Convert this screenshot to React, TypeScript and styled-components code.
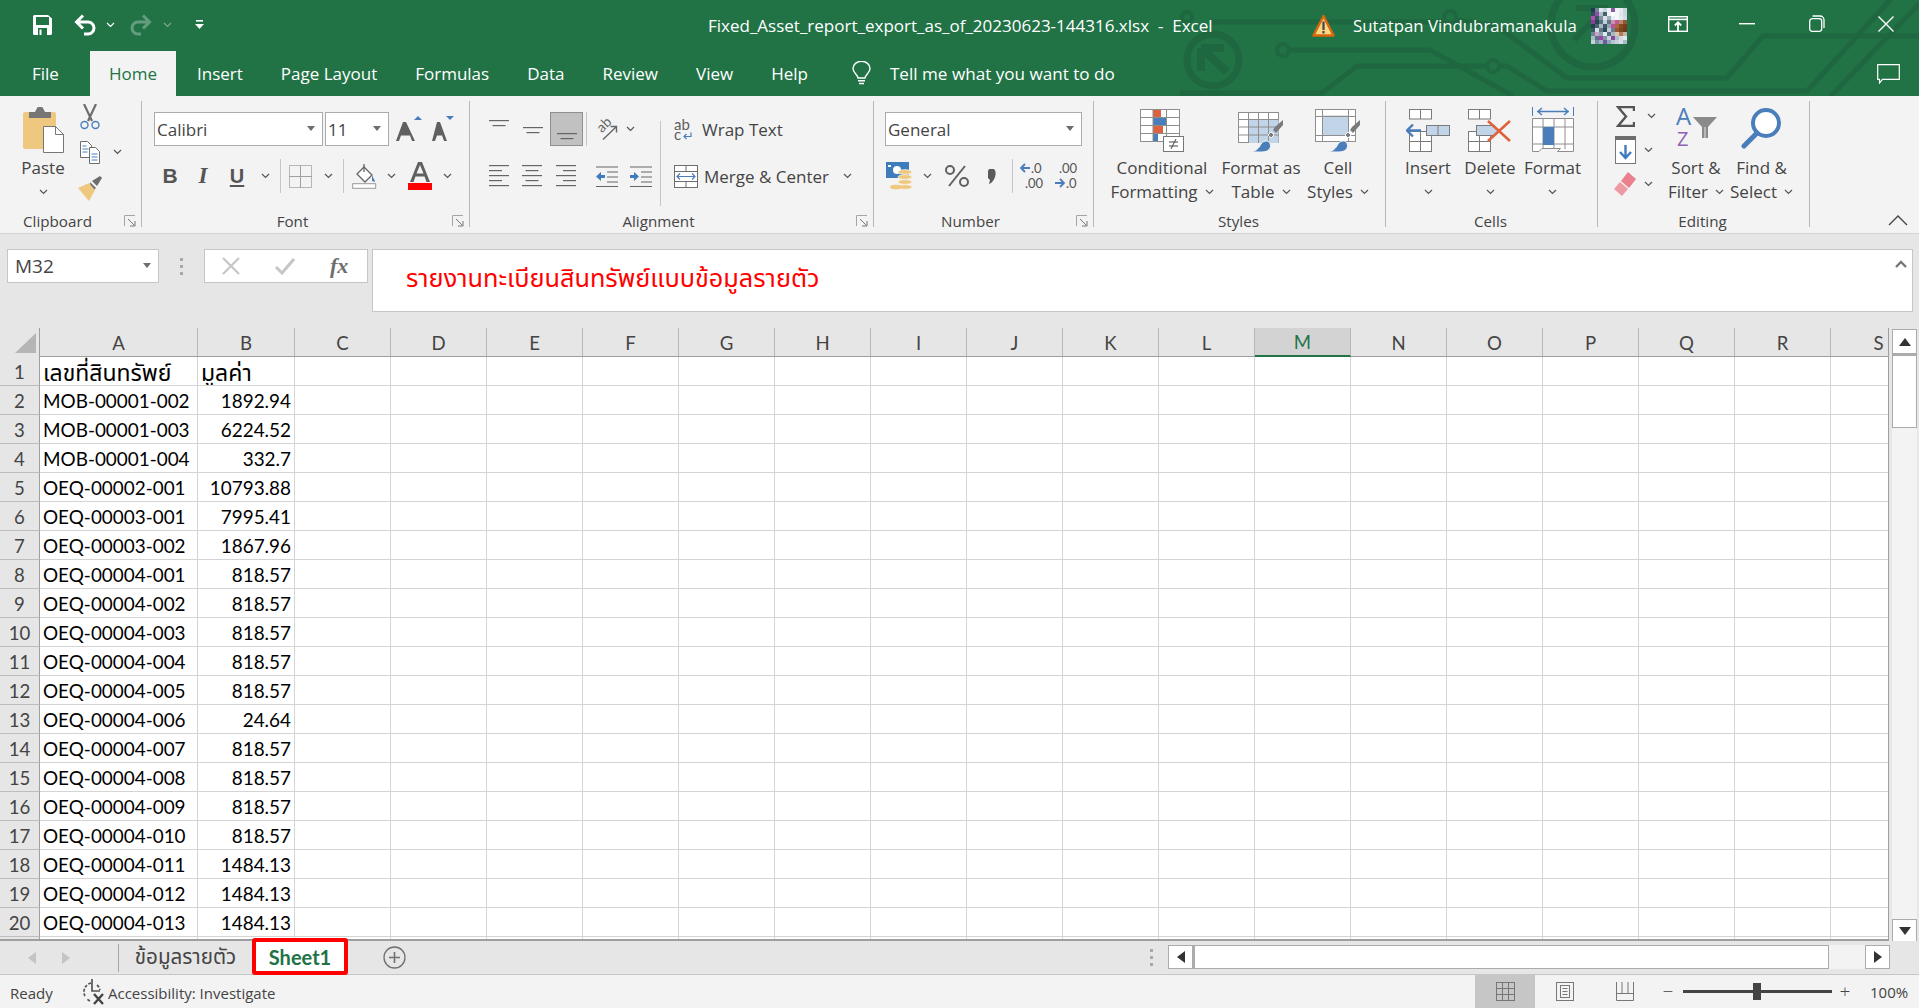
import React from "react";
import styled, { createGlobalStyle } from "styled-components";

const ui = `"Open Sans", "Noto Sans", sans-serif`;
const sheetFont = `Lato, "Noto Sans Thai", "Noto Sans", sans-serif`;
const green = "#217346";
const ink = "#444444";

const Global = createGlobalStyle`
  html, body { margin: 0; padding: 0; background: #e6e6e6; }
  svg { display: block; flex: none; }
`;

const Page = styled.div`
  width: 1919px; height: 1008px; overflow: hidden; display: flex; flex-direction: column;
  background: #e6e6e6; font-family: ${ui}; color: ${ink};
`;
const TopBand = styled.header`
  position: relative; height: 96px; flex: none; background: ${green}; color: #fff; overflow: hidden;
`;
const Circuit = styled.svg`position: absolute; inset: 0;`;
const TitleRow = styled.div`
  position: relative; height: 51px; display: flex; align-items: center; padding-left: 33px;
`;
const Qat = styled.div`width: 675px; flex: none; display: flex; align-items: center; margin-top: -2px;`;
const QatItem = styled.div<{ $w: number }>`width: ${p => p.$w}px; display: flex;`;
const DocTitle = styled.div`
  width: 604px; flex: none; font-size: 17px; white-space: pre; color: #fff;
`;
const UserName = styled.div`
  width: 238px; flex: none; font-size: 16.8px; white-space: pre; margin-left: 18px;
`;
const WindowControls = styled.div`display: flex; flex: none; align-items: center; margin-left: 16px; margin-top: -4px;`;
const WinBtn = styled.div`width: 69.5px; display: flex; justify-content: center;`;
const TabRow = styled.nav`position: relative; height: 45px; display: flex; align-items: stretch;`;
const Tab = styled.div<{ $active?: boolean }>`
  padding: 0 19px; margin: ${p => (p.$active ? "0 2px 0 12px" : "0")};
  display: flex; align-items: center; font-size: 17px; padding-bottom: 1px;
  background: ${p => (p.$active ? "#f3f3f3" : "transparent")};
  color: ${p => (p.$active ? green : "#fff")};
  &:first-child { padding-left: 32px; }
`;
const TellMe = styled.div`
  display: flex; align-items: center; gap: 19px; margin-left: 25px; font-size: 17.1px; padding-bottom: 1px;
`;
const CommentBtn = styled.div`margin-left: auto; margin-right: 19px; align-self: center;`;

const Ribbon = styled.section`
  position: relative; height: 138px; flex: none; display: flex; background: #f3f3f3; border-bottom: 1px solid #d4d4d4; box-sizing: border-box;
`;
const Group = styled.div<{ $w: number }>`
  position: relative; width: ${p => p.$w}px; flex: none; box-sizing: border-box; margin: 5px 0 6px;
  border-right: 1px solid #b7b7b7; display: flex; flex-direction: column;
`;
const Body = styled.div<{ $pt?: number; $pl?: number }>`
  flex: 1; display: flex; min-height: 0; padding-top: ${p => p.$pt ?? 0}px; padding-left: ${p => p.$pl ?? 0}px;
`;
const GroupLabel = styled.div<{ $launcher?: boolean }>`
  height: 10px; line-height: 8px; text-align: center; font-size: 15.2px; color: ${ink}; white-space: nowrap;
  padding-right: ${p => (p.$launcher ? 26 : 2)}px;
`;
const Launcher = styled.div`position: absolute; right: 5px; bottom: 0;`;
const Stack = styled.div<{ $gap?: number; $mt?: number }>`
  display: flex; flex-direction: column; gap: ${p => p.$gap ?? 0}px; margin-top: ${p => p.$mt ?? 0}px;
`;
const ToolRow = styled.div<{ $h?: number }>`display: flex; align-items: center; height: ${p => p.$h ?? 34}px;`;
const Tool = styled.div<{ $w: number; $on?: boolean }>`
  width: ${p => p.$w}px; height: 34px; flex: none; display: flex; align-items: center; justify-content: center; box-sizing: border-box;
  background: ${p => (p.$on ? "#c1c1c1" : "transparent")}; border: ${p => (p.$on ? "1px solid #8f8f8f" : "0")};
`;
const ToolSep = styled.div<{ $w: number }>`
  width: ${p => p.$w}px; height: 34px; flex: none; display: flex; justify-content: center;
  &::after { content: ""; width: 1px; height: 100%; background: #c6c6c6; }
`;
const Combo = styled.div<{ $w: number; $ml?: number }>`
  width: ${p => p.$w}px; height: 34px; margin-left: ${p => p.$ml ?? 0}px; box-sizing: border-box; flex: none; background: #fff; border: 1px solid #ababab;
  display: flex; align-items: center; justify-content: space-between; padding: 0 7px 0 2px;
  font-size: 17px; color: ${ink};
`;
const ComboCaret = styled.span`
  width: 0; height: 0; border-left: 4px solid transparent; border-right: 4px solid transparent; border-top: 5px solid #6d6d6d; margin-top: -2px;
`;
const BigBtn = styled.div<{ $w: number }>`
  width: ${p => p.$w}px; flex: none; display: flex; flex-direction: column; align-items: center; font-size: 17px; color: ${ink};
`;
const BigIcon = styled.div`height: 52px; display: flex; align-items: center; justify-content: center;`;
const BigLine = styled.div`height: 24px; line-height: 24px; white-space: nowrap; display: flex; align-items: center; gap: 7px;`;
const InlineBtn = styled.div<{ $gap: number }>`
  height: 34px; display: flex; align-items: center; gap: ${p => p.$gap}px; font-size: 17px; color: ${ink}; white-space: nowrap;
`;
const MergeChev = styled.span`margin-left: 8px;`;
const VSep = styled.div`width: 1px; height: 85px; background: #c6c6c6; margin: 9px 13px 0 3px; flex: none;`;
const Collapse = styled.div`position: absolute; right: 11px; bottom: 7px;`;

const FormulaBar = styled.section`
  height: 94px; flex: none; box-sizing: border-box; padding: 15px 6px 0 7px; display: flex; align-items: flex-start; background: #e6e6e6;
`;
const NameBox = styled.div`
  width: 152px; height: 34px; box-sizing: border-box; background: #fff; border: 1px solid #c6c6c6; display: flex; align-items: center; justify-content: space-between;
  padding: 0 7px; font-size: 19px; color: ${ink};
`;
const Dots = styled.div`width: 45px; height: 34px; display: flex; align-items: center; justify-content: center;`;
const FxBox = styled.div`
  width: 164px; height: 34px; box-sizing: border-box; background: #fff; border: 1px solid #c6c6c6; display: flex; align-items: center; gap: 35px; padding-left: 17px;
`;
const FxGlyph = styled.span`font-family: "Liberation Serif", serif; font-style: italic; font-weight: 700; font-size: 22px; color: #6e6e6e;`;
const FormulaInput = styled.div`
  position: relative; flex: 1; height: 63px; margin-left: 4px; box-sizing: border-box; background: #fff; border: 1px solid #c6c6c6;
  padding: 7px 0 0 33px; color: #ff0000; font-family: ${sheetFont}; font-size: 25.3px; line-height: 40px;
`;
const FormulaChevron = styled.div`position: absolute; right: 5px; top: 10px;`;

const SheetArea = styled.section`
  height: 613px; flex: none; display: flex; box-sizing: border-box; background: #e6e6e6;
`;
const Grid = styled.div`
  width: 1889px; flex: none; box-sizing: border-box; overflow: hidden; border-bottom: 2px solid #9f9f9f; border-right: 1px solid #9f9f9f;
`;
const columns = "40px 158px 97px repeat(17, 96px)";
const HeadRow = styled.div`
  display: grid; grid-template-columns: ${columns}; height: 29px; box-sizing: border-box; border-bottom: 1px solid #9f9f9f;
`;
const ColHead = styled.div<{ $selected?: boolean }>`
  box-sizing: border-box; background: ${p => (p.$selected ? "#d3d3d3" : "#e6e6e6")}; border-right: 1px solid #b6b6b6;
  border-bottom: ${p => (p.$selected ? `2px solid ${green}` : "0")}; height: ${p => (p.$selected ? "29px" : "28px")};
  display: flex; align-items: center; justify-content: center; padding-top: 1px;
  font-family: ${sheetFont}; font-size: 18.6px; color: ${p => (p.$selected ? green : ink)};
`;
const Corner = styled.div`
  background: #e6e6e6; border-right: 1px solid #9f9f9f; padding: 5px 0 0 15px; box-sizing: border-box;
`;
const DataRow = styled.div`display: grid; grid-template-columns: ${columns}; height: 29px; box-sizing: border-box;`;
const RowHead = styled.div`
  box-sizing: border-box; background: #e6e6e6; border-right: 1px solid #9f9f9f; border-bottom: 1px solid #bdbdbd; padding-top: 2px;
  display: flex; align-items: center; justify-content: center; font-family: ${sheetFont}; font-size: 18.6px; color: ${ink};
`;
const GridCell = styled.div<{ $right?: boolean; $thai?: boolean }>`
  box-sizing: border-box; background: #fff; border-right: 1px solid #d4d4d4; border-bottom: 1px solid #d4d4d4;
  padding: 0 3px 0 3px; text-align: ${p => (p.$right ? "right" : "left")}; line-height: 30px; height: 29px; white-space: nowrap; overflow: hidden;
  font-family: ${sheetFont}; font-size: ${p => (p.$thai ? "23px" : "18.9px")}; color: #000;
`;
const VScroll = styled.div`
  width: 25px; margin-left: 3px; display: flex; flex-direction: column; height: 614px; background: #f3f3f3; margin-top: 1px;
`;
const ScrollBtn = styled.div<{ $w?: number; $h?: number }>`
  width: ${p => p.$w ?? 25}px; height: ${p => p.$h ?? 25}px; box-sizing: border-box; flex: none; background: #fff; border: 1px solid #ababab;
  display: flex; align-items: center; justify-content: center;
`;
const VThumb = styled.div`height: 74px; box-sizing: border-box; background: #fff; border: 1px solid #ababab; border-top-width: 2px;`;
const VTrack = styled.div`flex: 1;`;

const TabBar = styled.section`
  height: 34px; flex: none; box-sizing: border-box; display: flex; align-items: stretch; background: #e6e6e6; border-bottom: 1px solid #c6c6c6;
`;
const NavArrows = styled.div`width: 118px; display: flex; align-items: center; gap: 26px; padding-left: 28px; box-sizing: border-box;`;
const TabDivider = styled.div`width: 1px; height: 28px; background: #a6a6a6; align-self: center;`;
const SheetTab = styled.div`
  width: 133px; display: flex; align-items: center; justify-content: center; font-family: ${sheetFont}; font-size: 20.6px; color: ${ink}; box-sizing: border-box;
`;
const ActiveTab = styled.div`
  position: relative; z-index: 2; width: 96px; height: 37px; margin-top: -3px; box-sizing: border-box; background: #fff; border: 4px solid #ff0000; border-radius: 3px;
  display: flex; align-items: center; justify-content: center; font-family: ${sheetFont}; font-weight: 700; font-size: 20px; color: ${green};
`;
const AddSheet = styled.div`margin-left: 35px; align-self: center;`;
const TabDots = styled.div`margin-left: 744px; align-self: center; width: 18px;`;
const HScroll = styled.div`width: 722px; height: 24px; margin: 4px 0 0; display: flex; background: #f3f3f3;`;
const HThumb = styled.div`width: 636px; box-sizing: border-box; background: #fff; border: 1px solid #ababab; border-left-width: 2px; margin-right: auto;`;

const StatusBar = styled.footer`
  flex: 1; display: flex; align-items: center; background: #f3f3f3; font-size: 15px; color: ${ink};
`;
const Ready = styled.div`width: 81px; padding: 2px 0 0 10px; box-sizing: border-box;`;
const Accessibility = styled.div`display: flex; align-items: center; gap: 1px; width: 1394px; padding-top: 1px; box-sizing: border-box;`;
const AccessText = styled.span`padding-top: 1px;`;
const ViewBtn = styled.div<{ $on?: boolean; $w: number }>`
  width: ${p => p.$w}px; height: 33px; display: flex; align-items: center; justify-content: center; background: ${p => (p.$on ? "#c6c6c6" : "transparent")};
`;
const ZoomSlider = styled.div`
  position: relative; width: 149px; height: 3px; background: #444; margin: 0 5px 0 7px;
`;
const ZoomThumb = styled.div`position: absolute; left: 70px; top: -7px; width: 8px; height: 17px; background: #444;`;
const ZoomSign = styled.span<{ $ml?: number }>`width: 16px; margin-left: ${p => p.$ml ?? 0}px; text-align: center; font-size: 19px; font-weight: 300; line-height: 1;`;
const ZoomValue = styled.div`margin-left: 17px;`;

/* ---- drawings ---- */
const Chev = ({ c = "#555" }: { c?: string }) => (
  <svg width="9" height="6" viewBox="0 0 9 6"><path d="M1 1l3.5 3.5L8 1" fill="none" stroke={c} strokeWidth="1.2" /></svg>
);
const CircuitArt = () => (
  <Circuit width="1919" height="96" viewBox="0 0 1919 96" fill="none" stroke="#1f6740" strokeWidth="5">
    <path d="M1210 22H1445" />
    <circle cx="1187" cy="17" r="5" strokeWidth="4" />
    <circle cx="1450" cy="17" r="6" strokeWidth="4" />
    <circle cx="1283" cy="50" r="6" strokeWidth="4" />
    <path d="M1289 50H1430L1513 96" />
    <path d="M1180 93H1322L1357 66H1487M1499 66H1507L1547 91H1807L1892 -2" />
    <circle cx="1493" cy="66" r="6" strokeWidth="4" />
    <circle cx="1213" cy="60" r="26" strokeWidth="7" />
    <path d="M1201 48V71M1201 48H1224M1201 48L1227 72" strokeWidth="8" />
    <circle cx="1593" cy="25" r="42" strokeWidth="7" />
    <path d="M1576 8H1605V36M1605 8L1574 40" strokeWidth="6" />
    <path d="M1456 20L1497 26L1563 75Q1565 78 1570 78H1727L1763 36H1919" />
    <path d="M1830 97L1919 4" />
  </Circuit>
);
const SaveIcon = () => (
  <svg width="19" height="20" viewBox="0 0 19 20">
    <path d="M0 1.5A1.5 1.5 0 011.5 0H15l4 3.5V18.5a1.5 1.5 0 01-1.5 1.5H1.5A1.5 1.5 0 010 18.5z" fill="#fff" />
    <rect x="3" y="2" width="13" height="8" fill={green} />
    <rect x="5" y="13" width="9" height="7" fill={green} />
    <rect x="6.5" y="14.5" width="2" height="5.5" fill="#fff" />
  </svg>
);
const UndoIcon = () => (
  <svg width="22" height="22" viewBox="0 0 22 22">
    <path d="M9 1.5L2.5 8L9 14.5M3 8H14a6 6 0 010 12H10" fill="none" stroke="#fff" strokeWidth="3" />
  </svg>
);
const RedoIcon = () => (
  <svg width="22" height="22" viewBox="0 0 22 22" opacity="0.3">
    <path d="M13 1.5L19.5 8L13 14.5M19 8H8a6 6 0 000 12h3" fill="none" stroke="#fff" strokeWidth="3" />
  </svg>
);
const CustomizeIcon = () => (
  <svg width="9" height="10" viewBox="0 0 9 10"><rect x="1" width="7" height="1.6" fill="#fff" /><path d="M0 4h9L4.5 9z" fill="#fff" /></svg>
);
const WarnIcon = () => (
  <svg width="23" height="23" viewBox="0 0 23 23">
    <path d="M11.5 2L21.5 21.5H1.5z" fill="#f9d586" stroke="#d9670e" strokeWidth="2.4" strokeLinejoin="round" />
    <rect x="10.4" y="7.5" width="2.2" height="8.5" fill="#444" /><rect x="10.4" y="17" width="2.2" height="2.4" fill="#444" />
  </svg>
);
const avatarPixels = [
  ["#1f3d48", "#6f8490", "#dfe8ee", "#c5d2dc", "#eef2f5", "#8a5aa8", "#f2f5f7", "#e7ecf0", "#c8d3db"],
  ["#2f4f5c", "#8c4fa6", "#aebfca", "#47606c", "#eef2f5", "#ffffff", "#f4f6f8", "#dfe6ea", "#cbd6de"],
  ["#b24fb4", "#3a5562", "#7f95a2", "#d9e3e9", "#9db0bc", "#e9eef2", "#f7f8fa", "#e3e9ee", "#d2dbe2"],
  ["#8a3f9c", "#2b4653", "#55707e", "#c2d0d9", "#5d7885", "#cf8fb0", "#c05a8e", "#b88a6a", "#8f5a35"],
  ["#24414d", "#47626f", "#a3b6c2", "#3f5966", "#90a5b1", "#c04fa0", "#a8683c", "#8a4a22", "#7a3d18"],
  ["#3a5662", "#d4dee5", "#5f7a87", "#2f4a57", "#bccad3", "#6a7f8c", "#96572c", "#7d4520", "#6d3a1a"],
  ["#6f8794", "#c8a0c8", "#8ca0ac", "#e2e9ee", "#56707d", "#a8b8c3", "#d9c4b0", "#b07f58", "#c5b3a5"],
  ["#a9bcc8", "#5a7482", "#a040a8", "#7e96a3", "#c4d1da", "#8a47a0", "#aebdc8", "#d4dde4", "#e4e9ee"],
  ["#c3d1db", "#7c95a6", "#9eb3c3", "#6f5a9a", "#8ea5b6", "#b6c4d0", "#c7d2dc", "#d8e0e7", "#a8b9c8"],
];
const Avatar = () => (
  <svg width="36" height="36" viewBox="0 0 9 9" shapeRendering="crispEdges">
    {avatarPixels.map((line, y) => line.map((fill, x) => <rect key={`${x}-${y}`} x={x} y={y} width="1" height="1" fill={fill} />))}
  </svg>
);
const PublishIcon = () => (
  <svg width="20" height="16" viewBox="0 0 20 16" fill="none" stroke="#fff" strokeWidth="1.4">
    <rect x=".7" y=".7" width="18.6" height="14.6" /><path d="M1 3.4h18" strokeWidth="1.6" /><path d="M10 15V6.5M6.8 9.5L10 6.3l3.2 3.2" strokeWidth="1.8" />
  </svg>
);
const MinIcon = () => <svg width="16" height="2" viewBox="0 0 16 2"><rect width="16" height="1.4" fill="#fff" /></svg>;
const RestoreIcon = () => (
  <svg width="16" height="17" viewBox="0 0 16 17" fill="none" stroke="#fff" strokeWidth="1.3">
    <rect x=".7" y="3.7" width="12" height="12.6" rx="2.5" /><path d="M3.5 1h7.5a4 4 0 014 4v8" />
  </svg>
);
const CloseIcon = () => (
  <svg width="16" height="16" viewBox="0 0 16 16"><path d="M.5.5l15 15M15.5.5l-15 15" stroke="#fff" strokeWidth="1.4" /></svg>
);
const BulbIcon = () => (
  <svg width="19" height="25" viewBox="0 0 19 25" fill="none" stroke="#fff" strokeWidth="1.4">
    <path d="M6 17c0-3-5-5-5-9.500a8.500 7.200 0 0117 0C18 12 13 14 13 17z" /><path d="M6 19.800h7M7 22.500h5" strokeWidth="1.6" />
  </svg>
);
const CommentIcon = () => (
  <svg width="23" height="20" viewBox="0 0 23 20"><path d="M.7.7h21.600v14.600H5.500L2.500 19v-3.700H.7z" fill="none" stroke="#fff" strokeWidth="1.2" /></svg>
);
const PasteIcon = () => (
  <svg width="41" height="46" viewBox="0 0 41 46">
    <rect y="5" width="33" height="37" rx="2" fill="#edc87e" />
    <path d="M6 5h6l2-4a2 2 0 012-1h2a2 2 0 012 1l2 4h6v6H6z" fill="#767676" />
    <path d="M20.500 19.500h12l8 8v18h-20z" fill="#fff" stroke="#767676" />
    <path d="M32.500 19.500v8h8" fill="none" stroke="#767676" />
  </svg>
);
const CutIcon = () => (
  <svg width="20" height="26" viewBox="0 0 20 26" fill="none">
    <path d="M4 0l8 17M16 0L8 17" stroke="#6d6d6d" strokeWidth="2.200" />
    <circle cx="4.500" cy="21" r="3.500" stroke="#4a7ebb" strokeWidth="1.400" /><circle cx="15.500" cy="21" r="3.500" stroke="#4a7ebb" strokeWidth="1.400" />
  </svg>
);
const CopyIcon = () => (
  <svg width="20" height="23" viewBox="0 0 20 23" fill="#fff" stroke="#6d6d6d">
    <path d="M.5.500h7l4 4v12H.5z" /><path d="M9.500 6.500h6l4 4v12h-10z" />
    <path d="M2.500 5h4M2.500 8h6M2.500 11h5M11.500 13h6M11.500 16h6M11.500 19h6" stroke="#4a7ebb" />
  </svg>
);
const BrushIcon = () => (
  <svg width="24" height="25" viewBox="0 0 24 25">
    <path d="M14 5l5 5 5-8-2-2z" fill="#6d6d6d" />
    <path d="M12 6l6 6-5 5z" fill="#6d6d6d" />
    <path d="M11 7l6 7-6 11-11-13z" fill="#edc87e" />
  </svg>
);
const GrowA = ({ s, up }: { s: number; up: boolean }) => (
  <svg width={s + 10} height="26" viewBox={`0 0 ${s + 10} 26`}>
    <path d={`M${s / 2 - 1} 6L1 25h3l2-5.500h${s - 9}L${s - 1} 25h3L${s / 2 + 2} 6z`} fill="#606060" />
    {up ? <path d={`M${s + 1} 3h8l-4-4z`} transform="translate(0 1)" fill="#4a7ebb" /> : <path d={`M${s + 1} 0h8l-4 4z`} fill="#4a7ebb" />}
  </svg>
);
const BoldB = styled.span`font-family: "Liberation Sans", sans-serif; font-weight: 700; font-size: 21px; color: #555;`;
const ItalicI = styled.span`font-family: "Liberation Serif", serif; font-style: italic; font-weight: 700; font-size: 23px; color: #555;`;
const UnderU = styled.span`font-family: "Liberation Sans", sans-serif; font-size: 20px; font-weight: 700; color: #555; text-decoration: underline; text-underline-offset: 2px;`;
const BorderIcon = () => (
  <svg width="23" height="23" viewBox="0 0 23 23" fill="none" stroke="#7a7a7a" strokeDasharray="1 1">
    <rect x=".5" y=".5" width="22" height="22" /><path d="M11.500 0v23M0 11.500h23" strokeDasharray="none" stroke="#a0a0a0" />
  </svg>
);
const FillIcon = () => (
  <svg width="25" height="25" viewBox="0 0 25 25">
    <path d="M12 3l8 8-7 7-8-8z" fill="#fff" stroke="#666" strokeWidth="1.300" />
    <path d="M12 0v8" stroke="#666" strokeWidth="1.300" /><path d="M20 11c1 3 3 5 3 7l-3-1z" fill="#4a7ebb" />
    <rect x=".7" y="19.700" width="23" height="4.600" fill="#fff" stroke="#999" />
  </svg>
);
const ColorA = () => (
  <svg width="24" height="28" viewBox="0 0 24 28">
    <path d="M10 0L2 20h3.500l2-5.500h9L18.500 20H22L14 0zM8.500 11.500L12 3l3.500 8.500z" fill="#606060" />
    <rect y="21" width="24" height="7" fill="#ff0000" />
  </svg>
);
const Lines = ({ y, kind }: { y: number[]; kind: "center" | "left" | "right" }) => (
  <svg width="20" height="24" viewBox="0 0 20 24">
    {y.map((v, i) => {
      const short = i % 2 === 1;
      const w = short ? 13 : 20;
      const x = !short || kind === "left" ? 0 : kind === "right" ? 7 : 3.5;
      return <rect key={v} x={x} y={v} width={w} height="1.2" fill="#666" />;
    })}
  </svg>
);
const OrientText = styled.text`font-family: Lato, sans-serif; font-size: 14px; fill: #666;`;
const OrientIcon = () => (
  <svg width="30" height="36" viewBox="-4 -6 30 36" fill="none">
    <OrientText x="2" y="13" transform="rotate(-45 6 12)" dx="1" dy="2">ab</OrientText>
    <path d="M7 22.500L20 10M14.500 9.500H20.500V15.500" stroke="#666" strokeWidth="1.400" />
  </svg>
);
const Indent = ({ dir }: { dir: "dec" | "inc" }) => (
  <svg width="22" height="21" viewBox="0 0 22 21">
    <rect y=".5" width="22" height="1" fill="#666" />
    {[5.500, 10.500, 15.500].map(v => <rect key={v} x="11" y={v} width="11" height="1" fill="#666" />)}
    <rect y="20" width="22" height="1" fill="#666" />
    <path d={dir === "dec" ? "M0 10.500l5-4.500v3h4v3H5v3z" : "M9 10.500L4 6v3H0v3h4v3z"} fill="#3f7cbd" />
  </svg>
);
const WrapIcon = () => (
  <svg width="18" height="26" viewBox="0 0 18 26" fill="none">
    <text x="0" y="14" fontSize="15" fill="#5f5f5f" fontFamily="Lato, sans-serif">ab</text>
    <text x="0" y="24" fontSize="15" fill="#5f5f5f" fontFamily="Lato, sans-serif">c</text>
    <path d="M17 16.500v4h-7M12.500 18l-2.500 2.500 2.500 2.500" stroke="#4a7ebb" strokeWidth="1.200" />
  </svg>
);
const MergeIcon = () => (
  <svg width="24" height="23" viewBox="0 0 24 23" fill="#fff" stroke="#6d6d6d">
    <rect x=".5" y=".5" width="23" height="22" />
    <path d="M0 6.500h24M0 16.500h24M12 0v6M12 17v6" />
    <path d="M3 11.500h18M6 8.500l-3 3 3 3M18 8.500l3 3-3 3" stroke="#4a7ebb" strokeWidth="1.200" fill="none" />
  </svg>
);
const CurrencyIcon = () => (
  <svg width="28" height="29" viewBox="0 0 28 29">
    <rect width="23" height="16" fill="#3f7cbd" /><circle cx="11" cy="8" r="4" fill="#fff" /><rect x="2" y="3" width="3" height="2" fill="#fff" />
    {[10, 15, 20, 25].map(v => <ellipse key={v} cx="19" cy={v} rx="7" ry="2.300" fill="#edc87e" stroke="#f7f3e6" strokeWidth=".8" />)}
    <ellipse cx="10" cy="25" rx="6" ry="2.300" fill="#edc87e" />
  </svg>
);
const DecimalText = styled.text`font-family: Lato, sans-serif; font-size: 13px; fill: #555;`;
const IncDec = ({ inc }: { inc: boolean }) => (
  <svg width="32" height="30" viewBox="0 0 32 30">
    {inc ? (
      <>
        <path d="M3 7h9M7 3L3 7l4 4" fill="none" stroke="#4a7ebb" strokeWidth="1.800" />
        <DecimalText x="13" y="12">.0</DecimalText><DecimalText x="7" y="27">.00</DecimalText>
      </>
    ) : (
      <>
        <DecimalText x="7" y="12">.00</DecimalText>
        <path d="M3 22h9M8 18l4 4-4 4" fill="none" stroke="#4a7ebb" strokeWidth="1.800" />
        <DecimalText x="14" y="27">.0</DecimalText>
      </>
    )}
  </svg>
);
const CondIcon = () => (
  <svg width="44" height="43" viewBox="0 0 44 43" fill="none" stroke="#8e8e8e">
    <rect x=".5" y=".5" width="39" height="32" fill="#fff" />
    <rect x="13" y="1" width="8" height="7" fill="#dc6141" stroke="none" /><rect x="13" y="9" width="14" height="7" fill="#4a7ebb" stroke="none" />
    <rect x="13" y="17" width="10" height="7" fill="#dc6141" stroke="none" /><rect x="13" y="25" width="5" height="7" fill="#4a7ebb" stroke="none" />
    <path d="M0 8.500h40M0 16.500h40M0 24.500h40M13 0v33M26.500 0v33" />
    <rect x="23.500" y="27.500" width="20" height="15" fill="#fff" stroke="#777" />
    <path d="M29 33h9M29 37h9M36 30l-5 10" stroke="#444" />
  </svg>
);
const BrushStroke = () => (
  <>
    <path d="M45 11l-8 7-2 3 3 3 7-8z" fill="#7a7a7a" stroke="none" /><path d="M33 23l-3 3 3 3 3-3z" fill="#7a7a7a" stroke="#f3f3f3" />
    <path d="M11 43c7 0 10-4 12-8 2-3 6-4 8-2 3 3 2 10-7 10z" fill="#4a7ebb" stroke="#f3f3f3" />
  </>
);
const TableIcon = () => (
  <svg width="46" height="43" viewBox="0 0 46 43" fill="none" stroke="#8e8e8e">
    <rect x=".5" y="3.500" width="40" height="30" fill="#fff" />
    <rect x="10.500" y="11" width="30" height="23" fill="#c2d5e8" stroke="none" />
    <path d="M0 10.500h41M0 18h41M0 26h41M10.500 3v31M20.500 3v31M30.500 3v31" />
    <BrushStroke />
  </svg>
);
const CellStyleIcon = () => (
  <svg width="46" height="43" viewBox="0 0 46 43" fill="none" stroke="#8e8e8e">
    <rect x=".5" y=".5" width="40" height="32" fill="#fff" />
    <rect x="7.500" y="7" width="26" height="19.500" fill="#c2d5e8" stroke="#8e8e8e" strokeWidth=".5" />
    <path d="M0 7.500h41M0 26.500h41M7.500 0v33M33.500 0v33" />
    <BrushStroke />
  </svg>
);
const InsertIcon = () => (
  <svg width="44" height="43" viewBox="0 0 44 43" fill="#fff" stroke="#7a7a7a">
    <rect x="3.500" y=".5" width="22" height="9.500" /><path d="M14.500 0v10" />
    <rect x="3.500" y="22.500" width="22" height="20" /><path d="M14.500 22v21M3 32.500h23" />
    <rect x="20.500" y="16.500" width="23" height="10" fill="#c2d5e8" /><path d="M32 16v11" />
    <path d="M1 21.500h14M7 15.500l-6 6 6 6" fill="none" stroke="#4a7ebb" strokeWidth="2.400" />
  </svg>
);
const DeleteIcon = () => (
  <svg width="44" height="43" viewBox="0 0 44 43" fill="#fff" stroke="#7a7a7a">
    <rect x=".5" y=".5" width="22" height="9.500" /><path d="M11.500 0v10" />
    <rect x=".5" y="22.500" width="22" height="20" /><path d="M11.500 22v21M0 32.500h23" />
    <rect x="8.500" y="16.500" width="18" height="10" fill="#c2d5e8" /><path d="M26 15l5 6.500-5 6" fill="#c2d5e8" stroke="none" />
    <path d="M20 12l22 20M42 12L20 32" stroke="#e0623d" strokeWidth="2.600" fill="none" />
  </svg>
);
const FormatIcon = () => (
  <svg width="42" height="46" viewBox="0 0 42 46" fill="#fff" stroke="#8e8e8e">
    <path d="M.5 0v9M41.500 0v9" stroke="#4a7ebb" />
    <path d="M5 4.500h32M10 1l-4 3.500 4 3.500M32 1l4 3.500-4 3.500" fill="none" stroke="#4a7ebb" strokeWidth="1.400" />
    <path d="M.5 11.500h41v33h-16l3-3H10l-3 3H.5z" />
    <path d="M0 20h42M0 37h42M11 11v31M22 11v31M33 11v31" />
    <rect x="11" y="20" width="11" height="18" fill="#4a7ebb" stroke="none" />
  </svg>
);
const SigmaIcon = () => (
  <svg width="19" height="21" viewBox="0 0 19 21"><path d="M18 5V1H2l8 9.500L2 20h16v-4" fill="none" stroke="#555" strokeWidth="2.400" /></svg>
);
const FillDownIcon = () => (
  <svg width="21" height="28" viewBox="0 0 21 28" fill="#fff" stroke="#777">
    <rect x=".5" y=".5" width="20" height="27" /><rect x="0" y="0" width="21" height="4" fill="#6d6d6d" stroke="none" />
    <path d="M10.500 9v13M5 16l5.500 6 5.500-6" fill="none" stroke="#3f7cbd" strokeWidth="2.400" />
  </svg>
);
const EraserIcon = () => (
  <svg width="22" height="25" viewBox="0 0 22 25"><path d="M14 0l8 7-7 9-8-7z" fill="#e9808c" /><path d="M6 10l8 7-6 7-8-7z" fill="#ee9aa5" /></svg>
);
const SortLetter = styled.text<{ $c: string; $s: number }>`font-family: "Open Sans", sans-serif; font-size: ${p => p.$s}px; fill: ${p => p.$c};`;
const SortIcon = () => (
  <svg width="43" height="64" viewBox="0 -8 43 64">
    <SortLetter x="1" y="19" $s={24} $c="#4a7ebb">A</SortLetter>
    <SortLetter x="2" y="40" $s={20} $c="#8e63b4">Z</SortLetter>
    <path d="M18 11h24l-9 10v11h-6V21z" fill="#8a8a8a" /><path d="M30 21v11" stroke="#e8e8e8" />
  </svg>
);
const FindIcon = () => (
  <svg width="41" height="46" viewBox="0 0 41 46" fill="none">
    <circle cx="25" cy="16" r="13" stroke="#4a7ebb" strokeWidth="4" fill="#fff" />
    <path d="M16 26L3 39" stroke="#4a7ebb" strokeWidth="5" strokeLinecap="round" />
  </svg>
);
const LauncherIcon = () => (
  <svg width="12" height="12" viewBox="0 0 12 12" fill="none" stroke="#777"><path d="M.5 11V.5H11" stroke="#a5a5a5" /><path d="M4 4l6.500 6.500M11 6v5H6" /></svg>
);
const CollapseIcon = () => (
  <svg width="20" height="11" viewBox="0 0 20 11"><path d="M1 10L10 1l9 9" fill="none" stroke="#444" strokeWidth="1.400" /></svg>
);
const CaretSolid = ({ d, c = "#444" }: { d: "u" | "d" | "l" | "r"; c?: string }) => {
  const p = { u: "M0 8L6 0l6 8z", d: "M0 0l6 8 6-8z", l: "M8 0L0 6l8 6z", r: "M0 0l8 6-8 6z" }[d];
  return <svg width={d === "u" || d === "d" ? 12 : 8} height={d === "u" || d === "d" ? 8 : 12} viewBox={d === "u" || d === "d" ? "0 0 12 8" : "0 0 8 12"}><path d={p} fill={c} /></svg>;
};
const VDots = () => (
  <svg width="3" height="17" viewBox="0 0 3 17" fill="#a8a8a8"><rect width="3" height="3" /><rect y="7" width="3" height="3" /><rect y="14" width="3" height="3" /></svg>
);
const AccessIcon = () => (
  <svg width="26" height="27" viewBox="0 0 26 27" fill="none" stroke="#555" strokeWidth="1.700">
    <path d="M10 4a9 9 0 00-6 13M16 6a8 8 0 013 5M9 22a9 9 0 01-3-2" strokeDasharray="3 1.500" />
    <path d="M11 0v12h8" /><path d="M13 15l9 10M22 15l-9 10" strokeWidth="2.400" stroke="#444" />
  </svg>
);
const NormalView = () => (
  <svg width="19" height="19" viewBox="0 0 19 19" fill="none" stroke="#777"><rect x=".5" y=".5" width="18" height="18" /><path d="M6.500 0v19M12.500 0v19M0 6.500h19M0 12.500h19" /></svg>
);
const LayoutView = () => (
  <svg width="18" height="19" viewBox="0 0 18 19" fill="none" stroke="#777"><rect x=".5" y=".5" width="17" height="18" /><rect x="4.500" y="3.500" width="9" height="12" /><path d="M6.500 6.500h5M6.500 9.500h5M6.500 12.500h5" /></svg>
);
const BreakView = () => (
  <svg width="18" height="19" viewBox="0 0 18 19" fill="none" stroke="#777"><path d="M.5 0v18.500h17V0M.5 11.500h17M6 0v11.500M12 0v11.500" /></svg>
);

const rows: [string, string][] = [
  ["MOB-00001-002", "1892.94"], ["MOB-00001-003", "6224.52"], ["MOB-00001-004", "332.7"], ["OEQ-00002-001", "10793.88"],
  ["OEQ-00003-001", "7995.41"], ["OEQ-00003-002", "1867.96"], ["OEQ-00004-001", "818.57"], ["OEQ-00004-002", "818.57"],
  ["OEQ-00004-003", "818.57"], ["OEQ-00004-004", "818.57"], ["OEQ-00004-005", "818.57"], ["OEQ-00004-006", "24.64"],
  ["OEQ-00004-007", "818.57"], ["OEQ-00004-008", "818.57"], ["OEQ-00004-009", "818.57"], ["OEQ-00004-010", "818.57"],
  ["OEQ-00004-011", "1484.13"], ["OEQ-00004-012", "1484.13"], ["OEQ-00004-013", "1484.13"],
];
const colNames = "ABCDEFGHIJKLMNOPQRS".split("");
const emptyCols = colNames.slice(2);
const fiveLines = [1, 6, 11, 16, 21];

const Row = ({ n, a, b, thai }: { n: React.ReactNode; a?: string; b?: string; thai?: boolean }) => (
  <DataRow>
    <RowHead>{n}</RowHead>
    <GridCell $thai={thai}>{a}</GridCell>
    <GridCell $thai={thai} $right={!thai}>{b}</GridCell>
    {emptyCols.map(c => <GridCell key={c} />)}
  </DataRow>
);

export default function App() {
  return (
    <Page>
      <Global />
      <TopBand>
        <CircuitArt />
        <TitleRow>
          <Qat>
            <QatItem $w={41}><SaveIcon /></QatItem>
            <QatItem $w={32}><UndoIcon /></QatItem>
            <QatItem $w={24}><Chev c="#fff" /></QatItem>
            <QatItem $w={33}><RedoIcon /></QatItem>
            <QatItem $w={32}><Chev c="#7ea98f" /></QatItem>
            <QatItem $w={9}><CustomizeIcon /></QatItem>
          </Qat>
          <DocTitle>Fixed_Asset_report_export_as_of_20230623-144316.xlsx  -  Excel</DocTitle>
          <WarnIcon />
          <UserName>Sutatpan Vindubramanakula</UserName>
          <Avatar />
          <WindowControls>
            <WinBtn><PublishIcon /></WinBtn>
            <WinBtn><MinIcon /></WinBtn>
            <WinBtn><RestoreIcon /></WinBtn>
            <WinBtn><CloseIcon /></WinBtn>
          </WindowControls>
        </TitleRow>
        <TabRow>
          <Tab>File</Tab>
          <Tab $active>Home</Tab>
          <Tab>Insert</Tab>
          <Tab>Page Layout</Tab>
          <Tab>Formulas</Tab>
          <Tab>Data</Tab>
          <Tab>Review</Tab>
          <Tab>View</Tab>
          <Tab>Help</Tab>
          <TellMe><BulbIcon />Tell me what you want to do</TellMe>
          <CommentBtn><CommentIcon /></CommentBtn>
        </TabRow>
      </TopBand>

      <Ribbon>
        <Group $w={142}>
          <Body $pl={8} $pt={3}>
            <BigBtn $w={70}>
              <BigIcon><PasteIcon /></BigIcon>
              <BigLine>Paste</BigLine>
              <BigLine><Chev /></BigLine>
            </BigBtn>
            <Stack $mt={-4}>
              <ToolRow $h={34}><Tool $w={24}><CutIcon /></Tool></ToolRow>
              <ToolRow $h={36}><Tool $w={24}><CopyIcon /></Tool><Tool $w={30}><Chev /></Tool></ToolRow>
              <ToolRow $h={36}><Tool $w={24}><BrushIcon /></Tool></ToolRow>
            </Stack>
          </Body>
          <GroupLabel $launcher>Clipboard</GroupLabel>
          <Launcher><LauncherIcon /></Launcher>
        </Group>

        <Group $w={328}>
          <Body $pl={12} $pt={11}>
            <Stack $gap={13}>
              <ToolRow>
                <Combo $w={169}>Calibri<ComboCaret /></Combo>
                <Combo $w={64} $ml={2}>11<ComboCaret /></Combo>
                <Tool $w={40}><GrowA s={18} up /></Tool>
                <Tool $w={28}><GrowA s={14} up={false} /></Tool>
              </ToolRow>
              <ToolRow>
                <Tool $w={32}><BoldB>B</BoldB></Tool>
                <Tool $w={34}><ItalicI>I</ItalicI></Tool>
                <Tool $w={34}><UnderU>U</UnderU></Tool>
                <Tool $w={22}><Chev /></Tool>
                <ToolSep $w={8} />
                <Tool $w={32}><BorderIcon /></Tool>
                <Tool $w={24}><Chev /></Tool>
                <ToolSep $w={6} />
                <Tool $w={36}><FillIcon /></Tool>
                <Tool $w={18}><Chev /></Tool>
                <Tool $w={40}><ColorA /></Tool>
                <Tool $w={14}><Chev /></Tool>
              </ToolRow>
            </Stack>
          </Body>
          <GroupLabel $launcher>Font</GroupLabel>
          <Launcher><LauncherIcon /></Launcher>
        </Group>

        <Group $w={404}>
          <Body $pl={12} $pt={11}>
            <Stack $gap={13}>
              <ToolRow>
                <Tool $w={33}><Lines y={[3, 8]} kind="center" /></Tool>
                <Tool $w={35}><Lines y={[10, 15]} kind="center" /></Tool>
                <Tool $w={33} $on><Lines y={[16, 21]} kind="center" /></Tool>
                <ToolSep $w={7} />
                <Tool $w={34}><OrientIcon /></Tool>
                <Tool $w={12}><Chev /></Tool>
              </ToolRow>
              <ToolRow>
                <Tool $w={33}><Lines y={fiveLines} kind="left" /></Tool>
                <Tool $w={34}><Lines y={fiveLines} kind="center" /></Tool>
                <Tool $w={34}><Lines y={fiveLines} kind="right" /></Tool>
                <Tool $w={7} />
                <Tool $w={34}><Indent dir="dec" /></Tool>
                <Tool $w={33}><Indent dir="inc" /></Tool>
              </ToolRow>
            </Stack>
            <VSep />
            <Stack $gap={13}>
              <InlineBtn $gap={10}><WrapIcon />Wrap Text</InlineBtn>
              <InlineBtn $gap={6}><MergeIcon />Merge &amp; Center<MergeChev><Chev /></MergeChev></InlineBtn>
            </Stack>
          </Body>
          <GroupLabel $launcher>Alignment</GroupLabel>
          <Launcher><LauncherIcon /></Launcher>
        </Group>

        <Group $w={220}>
          <Body $pl={11} $pt={11}>
            <Stack $gap={13}>
              <Combo $w={197}>General<ComboCaret /></Combo>
              <ToolRow>
                <Tool $w={30}><CurrencyIcon /></Tool>
                <Tool $w={24}><Chev /></Tool>
                <Tool $w={36}><svg width="26" height="24" viewBox="0 0 26 24" fill="none" stroke="#606060" strokeWidth="2"><circle cx="6" cy="6" r="4" /><circle cx="20" cy="18" r="4" /><path d="M21 2L5 22" /></svg></Tool>
                <Tool $w={32}><svg width="9" height="15" viewBox="0 0 9 15"><path d="M2 0h5c2 2 2 5 1 8-1 3-3 6-6 7l1-4-2-2V2z" fill="#5a5a5a" /></svg></Tool>
                <ToolSep $w={10} />
                <Tool $w={34}><IncDec inc /></Tool>
                <Tool $w={34}><IncDec inc={false} /></Tool>
              </ToolRow>
            </Stack>
          </Body>
          <GroupLabel $launcher>Number</GroupLabel>
          <Launcher><LauncherIcon /></Launcher>
        </Group>

        <Group $w={292}>
          <Body $pl={8} $pt={3}>
            <BigBtn $w={120}>
              <BigIcon><CondIcon /></BigIcon>
              <BigLine>Conditional</BigLine>
              <BigLine>Formatting<Chev /></BigLine>
            </BigBtn>
            <BigBtn $w={78}>
              <BigIcon><TableIcon /></BigIcon>
              <BigLine>Format as</BigLine>
              <BigLine>Table<Chev /></BigLine>
            </BigBtn>
            <BigBtn $w={76}>
              <BigIcon><CellStyleIcon /></BigIcon>
              <BigLine>Cell</BigLine>
              <BigLine>Styles<Chev /></BigLine>
            </BigBtn>
          </Body>
          <GroupLabel>Styles</GroupLabel>
        </Group>

        <Group $w={212}>
          <Body $pl={11} $pt={3}>
            <BigBtn $w={62}>
              <BigIcon><InsertIcon /></BigIcon>
              <BigLine>Insert</BigLine>
              <BigLine><Chev /></BigLine>
            </BigBtn>
            <BigBtn $w={62}>
              <BigIcon><DeleteIcon /></BigIcon>
              <BigLine>Delete</BigLine>
              <BigLine><Chev /></BigLine>
            </BigBtn>
            <BigBtn $w={63}>
              <BigIcon><FormatIcon /></BigIcon>
              <BigLine>Format</BigLine>
              <BigLine><Chev /></BigLine>
            </BigBtn>
          </Body>
          <GroupLabel>Cells</GroupLabel>
        </Group>

        <Group $w={212}>
          <Body $pl={16} $pt={3}>
            <Stack $mt={-5}>
              <ToolRow><Tool $w={22}><SigmaIcon /></Tool><Tool $w={31}><Chev /></Tool></ToolRow>
              <ToolRow><Tool $w={22}><FillDownIcon /></Tool><Tool $w={24}><Chev /></Tool></ToolRow>
              <ToolRow><Tool $w={22}><EraserIcon /></Tool><Tool $w={24}><Chev /></Tool></ToolRow>
            </Stack>
            <BigBtn $w={58}>
              <BigIcon><SortIcon /></BigIcon>
              <BigLine>Sort &amp;</BigLine>
              <BigLine>Filter<Chev /></BigLine>
            </BigBtn>
            <BigBtn $w={73}>
              <BigIcon><FindIcon /></BigIcon>
              <BigLine>Find &amp;</BigLine>
              <BigLine>Select<Chev /></BigLine>
            </BigBtn>
          </Body>
          <GroupLabel>Editing</GroupLabel>
        </Group>
        <Collapse><CollapseIcon /></Collapse>
      </Ribbon>

      <FormulaBar>
        <NameBox>M32<ComboCaret /></NameBox>
        <Dots><VDots /></Dots>
        <FxBox>
          <svg width="18" height="18" viewBox="0 0 18 18"><path d="M1 1l16 16M17 1L1 17" stroke="#c6c6c6" strokeWidth="2.200" /></svg>
          <svg width="20" height="18" viewBox="0 0 20 18"><path d="M1 10l6 6L19 2" fill="none" stroke="#c6c6c6" strokeWidth="3" /></svg>
          <FxGlyph>fx</FxGlyph>
        </FxBox>
        <FormulaInput>
          รายงานทะเบียนสินทรัพย์แบบข้อมูลรายตัว
          <FormulaChevron><svg width="12" height="8" viewBox="0 0 12 8"><path d="M1 7l5-5 5 5" fill="none" stroke="#777" strokeWidth="2.400" /></svg></FormulaChevron>
        </FormulaInput>
      </FormulaBar>

      <SheetArea>
        <Grid>
          <HeadRow>
            <Corner><svg width="21" height="20" viewBox="0 0 21 20"><path d="M21 0v20H0z" fill="#b5b5b5" /></svg></Corner>
            {colNames.map(c => <ColHead key={c} $selected={c === "M"}>{c}</ColHead>)}
          </HeadRow>
          <Row n={1} a="เลขที่สินทรัพย์" b="มูลค่า" thai />
          {rows.map(([a, b], i) => <Row key={a} n={i + 2} a={a} b={b} />)}
          <Row n="" />
        </Grid>
        <VScroll>
          <ScrollBtn><CaretSolid d="u" c="#333" /></ScrollBtn>
          <VThumb />
          <VTrack />
          <ScrollBtn $h={24}><CaretSolid d="d" c="#333" /></ScrollBtn>
        </VScroll>
      </SheetArea>

      <TabBar>
        <NavArrows><CaretSolid d="l" c="#c4c4c4" /><CaretSolid d="r" c="#c4c4c4" /></NavArrows>
        <TabDivider />
        <SheetTab>ข้อมูลรายตัว</SheetTab>
        <ActiveTab>Sheet1</ActiveTab>
        <AddSheet>
          <svg width="23" height="23" viewBox="0 0 23 23" fill="none" stroke="#707070" strokeWidth="1.300"><circle cx="11.500" cy="11.500" r="10.500" /><path d="M11.500 6v11M6 11.500h11" strokeWidth="1.600" /></svg>
        </AddSheet>
        <TabDots><VDots /></TabDots>
        <HScroll>
          <ScrollBtn $h={24}><CaretSolid d="l" c="#333" /></ScrollBtn>
          <HThumb />
          <ScrollBtn $h={24}><CaretSolid d="r" c="#333" /></ScrollBtn>
        </HScroll>
      </TabBar>

      <StatusBar>
        <Ready>Ready</Ready>
        <Accessibility><AccessIcon /><AccessText>Accessibility: Investigate</AccessText></Accessibility>
        <ViewBtn $on $w={60}><NormalView /></ViewBtn>
        <ViewBtn $w={60}><LayoutView /></ViewBtn>
        <ViewBtn $w={60}><BreakView /></ViewBtn>
        <ZoomSign $ml={5}>−</ZoomSign>
        <ZoomSlider><ZoomThumb /></ZoomSlider>
        <ZoomSign>+</ZoomSign>
        <ZoomValue>100%</ZoomValue>
      </StatusBar>
    </Page>
  );
}
